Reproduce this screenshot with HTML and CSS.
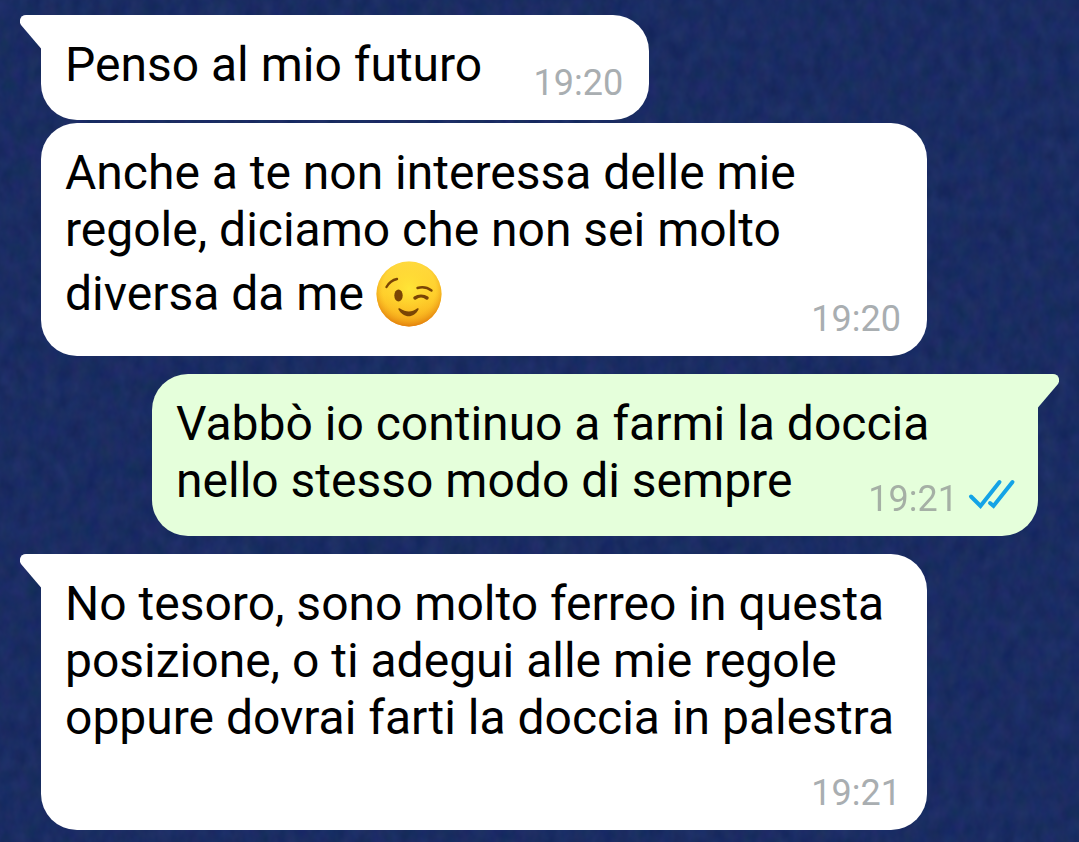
FILE: index.html
```html
<!DOCTYPE html>
<html lang="it">

<head>
  <meta charset="utf-8">
  <title>Chat</title>
  <meta name="viewport" content="width=device-width, initial-scale=1.0">
  <link rel="stylesheet" href="styles.css">
</head>

<body>
  <!-- denim wallpaper -->
  <svg class="wallpaper" aria-hidden="true">
    <filter id="denim" x="0" y="0" width="100%" height="100%" color-interpolation-filters="sRGB">
      <feTurbulence type="fractalNoise" baseFrequency="0.07 0.05" numOctaves="3" seed="4" />
      <feColorMatrix values="0.08 0 0 0 0.062
                             0.03 0.06 0 0 0.128
                             0.05 0 0.07 0 0.325
                             0 0 0 0 1" />
    </filter>
    <rect width="100%" height="100%" filter="url(#denim)" />
  </svg>

  <main class="chat">
    <div class="message in first">
      <svg class="tail" viewBox="0 0 22 34" aria-hidden="true">
        <path d="M22 0H6C1 0-2 5 1 10L21 33.500H22Z" />
      </svg>
      <p class="text">Penso al mio futuro<span class="spacer"></span></p>
      <div class="meta"><time>19:20</time></div>
    </div>

    <div class="message in">
      <p class="text">Anche a te non interessa delle mie regole, diciamo che non sei molto diversa da me <svg class="emoji" viewBox="0 0 66 66" role="img" aria-label="😉">
          <defs>
            <linearGradient id="face" x1="0" y1="0" x2="0" y2="1">
              <stop offset="0" stop-color="#ffe04a" />
              <stop offset="0.5" stop-color="#ffcf2c" />
              <stop offset="1" stop-color="#f5960f" />
            </linearGradient>
            <radialGradient id="shade" cx="0.5" cy="0.42" r="0.58">
              <stop offset="0" stop-color="#ffe838" stop-opacity="0.9" />
              <stop offset="0.7" stop-color="#ffd02c" stop-opacity="0.4" />
              <stop offset="1" stop-color="#e07d0c" stop-opacity="0.9" />
            </radialGradient>
          </defs>
          <circle cx="33" cy="33" r="32.500" fill="url(#face)" />
          <circle cx="33" cy="33" r="32.500" fill="url(#shade)" />
          <ellipse cx="22.500" cy="34.500" rx="4.200" ry="6" fill="#7a4505" />
          <g fill="none" stroke="#7a4505" stroke-linecap="round">
            <path d="M10.500 26C13 21.500 16 19 21 18" stroke-width="2.400" />
            <path d="M41.500 27C46.500 25.500 51.500 26.500 55.500 29.500" stroke-width="2.400" />
            <path d="M39 37C42.500 34.500 47.500 34.500 51 37" stroke-width="3.400" />
          </g>
          <path d="M22.500 48.500C22 47.500 23 47 24 47.500C30 51.500 36 51.500 41 47.500C42 47 43 47.500 42.500 48.500C38 57.500 27.500 57.500 22.500 48.500Z" fill="#7a4505" />
        </svg><span class="spacer"></span></p>
      <div class="meta"><time>19:20</time></div>
    </div>

    <div class="message out first">
      <svg class="tail" viewBox="0 0 22 34" aria-hidden="true">
        <path d="M0 0H16C21 0 24 5 21 10L1 33.500H0Z" />
      </svg>
      <p class="text">Vabbò io continuo a farmi la doccia nello stesso modo di sempre<span class="spacer"></span></p>
      <div class="meta">
        <time>19:21</time>
        <svg class="ticks" viewBox="0 0 46 30" role="img" aria-label="Letto">
          <path d="M3 18.500L12.500 28L31.500 4M22 25L25.500 28L44.500 4" />
        </svg>
      </div>
    </div>

    <div class="message in first">
      <svg class="tail" viewBox="0 0 22 34" aria-hidden="true">
        <path d="M22 0H6C1 0-2 5 1 10L21 33.500H22Z" />
      </svg>
      <p class="text">No tesoro, sono molto ferreo in questa posizione, o ti adegui alle mie regole oppure dovrai farti la doccia in palestra<span class="spacer"></span></p>
      <div class="meta"><time>19:21</time></div>
    </div>
  </main>
</body>

</html>
```

FILE: styles.css
```css
* {
  box-sizing: border-box;
  margin: 0;
  padding: 0;
}

body {
  font-family: Roboto, "Liberation Sans", sans-serif;
  font-size: 48px;
  line-height: 57px;
  color: #000;
  background-color: #192c62;
}

.wallpaper {
  position: fixed;
  top: 0;
  left: 0;
  width: 100%;
  height: 100%;
  z-index: -1;
}

.chat {
  display: flex;
  flex-direction: column;
  padding: 15px 41px 12px;
}

.message {
  position: relative;
  max-width: calc(100% - 111px);
  padding: 21px 24px 27px;
  border-radius: 36px;
}

.message + .message {
  margin-top: 3px;
}

.message + .first {
  margin-top: 18px;
}

.in {
  align-self: flex-start;
  background-color: #fff;
  fill: #fff;
}

.out {
  align-self: flex-end;
  background-color: #e5ffdb;
  fill: #e5ffdb;
}

.in.first {
  border-top-left-radius: 0;
}

.out.first {
  border-top-right-radius: 0;
}

.tail {
  position: absolute;
  top: 0;
  width: 22px;
  height: 34px;
}

.in .tail {
  left: -21px;
}

.out .tail {
  right: -21px;
}

/* keeps the end of the text clear of the time */
.spacer {
  display: inline-block;
  width: 143px;
}

.emoji {
  width: 66px;
  height: 66px;
  margin: 3px 0 2px;
  vertical-align: -19px;
}

.meta {
  position: absolute;
  right: 26px;
  bottom: 16px;
  display: flex;
  align-items: flex-start;
  gap: 10px;
  font-size: 36px;
  line-height: 42px;
  color: #a9aeb1;
}

.out .meta {
  right: 24px;
  color: #a5b0a5;
}

.ticks {
  width: 46px;
  height: 30px;
  overflow: visible;
  fill: none;
  stroke: #14a3e6;
  stroke-width: 4;
  stroke-linecap: round;
}
```
